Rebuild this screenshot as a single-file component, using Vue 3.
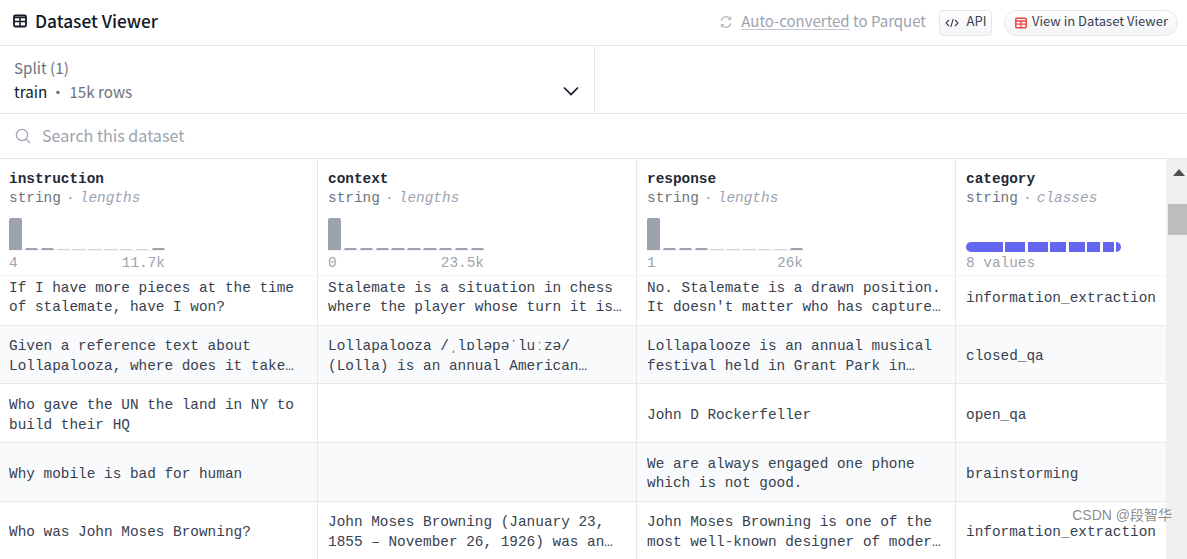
<script setup>
const columns = [
  { name: 'instruction', kind: 'lengths', min: '4', max: '11.7k', bars: [100, 6, 6, 3, 3, 3, 3, 3, 3, 6] },
  { name: 'context', kind: 'lengths', min: '0', max: '23.5k', bars: [100, 6, 6, 6, 6, 6, 6, 6, 6, 6] },
  { name: 'response', kind: 'lengths', min: '1', max: '26k', bars: [100, 6, 6, 6, 3, 3, 3, 3, 3, 6] },
  { name: 'category', kind: 'classes', segments: [36.5, 20, 20, 16, 16, 13, 10.5, 5] }
]
const rows = [
  ['If I have more pieces at the time of stalemate, have I won?', 'Stalemate is a situation in chess where the player whose turn it is to move is not in check and has no legal move.', 'No. Stalemate is a drawn position. It doesn\'t matter who has captured more pieces or is in a winning position', 'information_extraction'],
  ['Given a reference text about Lollapalooza, where does it take place, who started it and what is it?', 'Lollapalooza /ˌlɒləpəˈluːzə/ (Lolla) is an annual American four-day music festival held in Grant Park', 'Lollapalooze is an annual musical festival held in Grant Park in Chicago, Illinois.', 'closed_qa'],
  ['Who gave the UN the land in NY to build their HQ', '', 'John D Rockerfeller', 'open_qa'],
  ['Why mobile is bad for human', '', 'We are always engaged one phone which is not good.', 'brainstorming'],
  ['Who was John Moses Browning?', 'John Moses Browning (January 23, 1855 – November 26, 1926) was an American firearm designer who developed', 'John Moses Browning is one of the most well-known designer of modern firearms in the world.', 'information_extraction']
]
</script>

<template>
  <div class="viewer">
    <header class="top">
      <div class="title">
        <svg class="table-icon" viewBox="0 0 14 14" width="14" height="14">
          <rect x="1" y="1.5" width="12" height="11" rx="1.2" fill="none" stroke="#111827" stroke-width="1.8" />
          <path d="M1 7.6h12M7 3v9M1 3.6h12" fill="none" stroke="#111827" stroke-width="1.5" />
        </svg>
        <span>Dataset Viewer</span>
      </div>
      <div class="actions">
        <svg class="sync" viewBox="0 0 14 14" width="14" height="14">
          <path d="M2.2 5.5A5 5 0 0 1 11 3.6M11.8 8.5A5 5 0 0 1 3 10.4" fill="none" stroke="#b4b9c2" stroke-width="1.2" />
          <path d="M11.6 1.6v2.8H8.8M2.4 12.4V9.6h2.8" fill="none" stroke="#b4b9c2" stroke-width="1.2" />
        </svg>
        <span class="parquet"><u>Auto-converted</u> to Parquet</span>
        <button class="btn api">
          <svg viewBox="0 0 14 12" width="14" height="12">
            <path d="M4 3 1 6l3 3M10 3l3 3-3 3M8.2 2 5.8 10" fill="none" stroke="#374151" stroke-width="1.1" />
          </svg>
          <span class="btn-text">API</span>
        </button>
        <button class="btn pill">
          <svg viewBox="0 0 12 12" width="12" height="12">
            <rect x="0.8" y="1.3" width="10.4" height="9.4" rx="1" fill="none" stroke="#ef4444" stroke-width="1.5" />
            <path d="M.8 4h10.4M.8 7.2h10.4M6 4v6.5" fill="none" stroke="#ef4444" stroke-width="1.3" />
          </svg>
          <span class="btn-text">View in Dataset Viewer</span>
        </button>
      </div>
    </header>

    <section class="split-row">
      <div class="split">
        <div class="split-label">Split (1)</div>
        <div class="split-value">
          <span class="split-name">train</span>
          <span class="dot">·</span>
          <span>15k rows</span>
          <svg class="chevron" viewBox="0 0 16 10" width="16" height="10">
            <path d="M1 1.5 8 8.5l7-7" fill="none" stroke="#111827" stroke-width="1.7" />
          </svg>
        </div>
      </div>
    </section>

    <section class="search">
      <svg viewBox="0 0 16 16" width="16" height="16">
        <circle cx="7" cy="7" r="5.6" fill="none" stroke="#9ca3af" stroke-width="1.2" />
        <path d="m11 11 4.2 4.2" stroke="#9ca3af" stroke-width="1.2" />
      </svg>
      <span class="search-text">Search this dataset</span>
    </section>

    <section class="table-wrap">
      <div class="table">
        <div class="head">
          <div v-for="col in columns" :key="col.name" class="head-cell">
            <div class="col-name">{{ col.name }}</div>
            <div class="col-type">string<span class="sep">·</span><em>{{ col.kind }}</em></div>
            <div v-if="col.bars" class="chart">
              <div class="bars">
                <span v-for="(h, i) in col.bars" :key="i" class="bar" :class="{ faint: h < 5 }" :style="{ height: h + '%' }"></span>
              </div>
              <div class="range"><span>{{ col.min }}</span><span>{{ col.max }}</span></div>
            </div>
            <div v-else class="chart">
              <div class="classes">
                <span v-for="(w, i) in col.segments" :key="i" class="segment" :style="{ width: w + 'px' }"></span>
              </div>
              <div class="range"><span>8 values</span></div>
            </div>
          </div>
        </div>
        <div class="body">
          <div v-for="(row, r) in rows" :key="r" class="row">
            <div v-for="(cell, c) in row" :key="c" class="cell"><span class="clamp">{{ cell }}</span></div>
          </div>
        </div>
      </div>
      <div class="scrollbar">
        <svg class="arrow" viewBox="0 0 12 7" width="12" height="7"><path d="M6 0 12 7H0Z" fill="#505050" /></svg>
        <div class="thumb"></div>
      </div>
      <div class="watermark">CSDN @段智华</div>
    </section>
  </div>
</template>

<style>
html, body { margin: 0; background: #fff; overflow: hidden; }
</style>

<style scoped>
.viewer {
  width: 1187px;
  height: 559px;
  overflow: hidden;
  display: flex;
  flex-direction: column;
  font-family: "Noto Sans CJK SC", "Noto Sans", sans-serif;
  color: #111827;
}
.top {
  height: 45px;
  flex: none;
  border-bottom: 1px solid #e5e7eb;
  display: flex;
  align-items: center;
  justify-content: space-between;
  padding: 0 9px 0 13px;
}
.title {
  display: flex;
  align-items: center;
  gap: 8px;
  font-size: 17.3px;
  font-weight: 500;
  line-height: 24px;
}
.title span { padding-bottom: 4px; }
.table-icon { margin-bottom: 3px; }
.actions { display: flex; align-items: center; }
.sync { margin-right: 8px; margin-bottom: 1px; }
.parquet { font-size: 15px; line-height: 24px; color: #9ca3af; margin-right: 13px; padding-bottom: 4px; }
.parquet u { text-decoration-color: #c3c8d0; text-underline-offset: 2px; }
.btn {
  height: 26px;
  box-sizing: border-box;
  display: flex;
  align-items: center;
  font: inherit;
  font-size: 13px;
  color: #374151;
  background: linear-gradient(#ffffff, #f3f4f6);
  border: 1px solid #e5e7eb;
  padding: 0;
}
.btn-text { padding-bottom: 3px; line-height: 20px; }
.api { width: 53px; border-radius: 4px; justify-content: center; gap: 8px; margin-right: 12px; }
.pill { width: 174px; border-radius: 13px; justify-content: center; gap: 5px; padding-left: 1px; }
.split-row {
  height: 67px;
  flex: none;
  border-bottom: 1px solid #e5e7eb;
  display: flex;
}
.split {
  width: 595px;
  box-sizing: border-box;
  border-right: 1px solid #e5e7eb;
  padding: 9px 15px 0 14px;
  font-size: 15.2px;
  line-height: 24px;
}
.split-label { color: #6b7280; }
.split-value { display: flex; align-items: center; color: #6b7280; }
.split-name { color: #111827; }
.dot { margin: 0 4px 0 3px; }
.chevron { margin-left: auto; }
.search {
  height: 44px;
  flex: none;
  border-bottom: 1px solid #e5e7eb;
  display: flex;
  align-items: center;
  gap: 11px;
  padding-left: 15px;
  font-size: 16.1px;
  color: #9ca3af;
}
.search-text { padding-bottom: 2px; }
.table-wrap {
  flex: 1;
  display: flex;
  position: relative;
  overflow: hidden;
}
.table { width: 1166px; flex: none; font-family: "Liberation Mono", monospace; font-size: 14.4px; }
.head, .row {
  display: grid;
  grid-template-columns: 318px 319px 319px 1fr;
}
.head {
  position: relative;
  z-index: 1;
  height: 116px;
  background: #fff;
  border-bottom: 1px solid #f3f4f6;
}
.head-cell {
  border-right: 1px solid #e5e7eb;
  padding: 10px 0 0 10px;
  box-sizing: border-box;
  line-height: 19.5px;
  display: flex;
  flex-direction: column;
}
.head-cell:first-child { padding-left: 9px; }
.head-cell:last-child { border-right: 0; }
.col-name { font-weight: 700; color: #1f2937; padding-top: 1px; margin-bottom: -1px; }
.col-type { color: #6b7280; }
.col-type em { color: #9ca3af; }
.sep { color: #9ca3af; display: inline-block; width: 19px; text-align: center; }
.chart { margin-top: auto; width: 156px; }
.bars {
  height: 32px;
  display: flex;
  align-items: flex-end;
  gap: 2.4px;
  border-bottom: 1px solid #f3f4f6;
}
.bar {
  flex: 1;
  background: #9ca3af;
  border-radius: 2px 2px 0 0;
}
.bar.faint { background: #d1d5db; }
.classes {
  display: flex;
  gap: 2.6px;
  height: 10px;
  margin-bottom: -1px;
}
.segment { height: 10px; background: #6366f1; }
.segment:first-child { border-radius: 5px 0 0 5px; }
.segment:last-child { border-radius: 0 5px 5px 0; }
.range {
  display: flex;
  justify-content: space-between;
  color: #9ca3af;
  height: 24px;
  line-height: 25px;
}
.body { margin-top: -9px; }
.row {
  height: 58.67px;
  box-sizing: border-box;
  border-bottom: 1px solid #e5e7eb;
  color: #374151;
}
.row:nth-child(even) { background: #f9fafb; }
.cell {
  border-right: 1px solid #e5e7eb;
  padding: 5px 10px 0;
  display: flex;
  align-items: center;
  line-height: 19.5px;
  min-width: 0;
}
.cell:first-child { padding-left: 9px; }
.cell:last-child { border-right: 0; }
.clamp {
  display: -webkit-box;
  -webkit-box-orient: vertical;
  -webkit-line-clamp: 2;
  overflow: hidden;
}
.scrollbar {
  flex: 1;
  background: #f0f0f0;
  display: flex;
  flex-direction: column;
  align-items: flex-start;
}
.arrow { margin: 10px 0 0 7px; }
.thumb { width: 19px; margin: 28px 0 0 2px; height: 31px; background: #bdbdbd; }
.watermark {
  position: absolute;
  right: 15px;
  bottom: 34px;
  font-size: 14px;
  line-height: 20px;
  color: rgba(110, 110, 110, 0.8);
  font-family: "Liberation Sans", "Noto Sans CJK SC", sans-serif;
}
</style>
